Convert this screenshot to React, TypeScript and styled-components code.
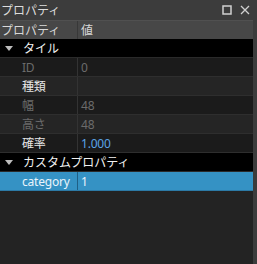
import React from 'react';
import styled, { createGlobalStyle } from 'styled-components';

const GlobalStyle = createGlobalStyle`
    html, body {
        margin: 0;
        padding: 0;
        background: #3c3c3c;
    }
`;

const Panel = styled.div`
    width: 257px;
    height: 264px;
    display: flex;
    flex-direction: column;
    background: #3c3c3c;
    font-family: 'Segoe UI', 'Noto Sans', 'Noto Sans CJK JP', sans-serif;
    font-size: 12px;
    overflow: hidden;
`;

const TitleBar = styled.div`
    height: 20px;
    display: flex;
    align-items: center;
    padding: 0 3px 0 1px;
    color: #dcdcdc;
`;

const Title = styled.span`
    flex: 1;
`;

const TitleButton = styled.span`
    width: 18px;
    height: 18px;
    display: flex;
    align-items: center;
    justify-content: center;
`;

const Tree = styled.div`
    flex: 1;
    margin-right: 4px;
    background: #232323;
    display: flex;
    flex-direction: column;
`;

const HeaderRow = styled.div`
    height: 18px;
    display: grid;
    grid-template-columns: 78px 1fr;
    background: #474747;
    color: #d8d8d8;
    border-top: 1px solid #505050;
`;

const HeaderCell = styled.div<{ $first?: boolean }>`
    display: flex;
    align-items: center;
    padding-left: ${(p) => (p.$first ? '1px' : '3px')};
    border-right: ${(p) => (p.$first ? '1px solid #383838' : 'none')};
`;

const GroupRow = styled.div`
    height: 19px;
    box-sizing: border-box;
    display: flex;
    align-items: center;
    background: #000;
    color: #f0f0f0;
    border-bottom: 1px solid #2a2a2a;
`;

const Arrow = styled.span`
    width: 0;
    height: 0;
    margin: 0 10px 0 5px;
    border-left: 4px solid transparent;
    border-right: 4px solid transparent;
    border-top: 5px solid #bdbdbd;
`;

const Row = styled.div<{ $odd?: boolean; $selected?: boolean }>`
    height: 19px;
    box-sizing: border-box;
    display: grid;
    grid-template-columns: 78px 1fr;
    background: ${(p) => (p.$selected ? '#3592c4' : p.$odd ? '#1b1b1b' : '#252525')};
    border-bottom: 1px solid ${(p) => (p.$selected ? '#2c7aa6' : '#2e2e2e')};
`;

const Cell = styled.div<{ $first?: boolean; $color: string }>`
    display: flex;
    align-items: center;
    padding-left: ${(p) => (p.$first ? '22px' : '3px')};
    color: ${(p) => p.$color};
    border-right: ${(p) => (p.$first ? '1px solid #333' : 'none')};
    white-space: nowrap;
    letter-spacing: -0.2px;
`;

const SelCell = styled(Cell)`
    border-right-color: #1f5f85;
`;

const DIM = '#6b6b6b';
const BRIGHT = '#e6e6e6';

const rows = [
    { name: 'ID', value: '0', nameColor: DIM, valueColor: DIM },
    { name: '種類', value: '', nameColor: BRIGHT, valueColor: BRIGHT },
    { name: '幅', value: '48', nameColor: DIM, valueColor: DIM },
    { name: '高さ', value: '48', nameColor: DIM, valueColor: DIM },
    { name: '確率', value: '1.000', nameColor: BRIGHT, valueColor: '#5aa3e6' },
];

const App: React.FC = () => {
    return (
        <Panel>
            <GlobalStyle />
            <TitleBar>
                <Title>プロパティ</Title>
                <TitleButton>
                    <svg width='10' height='10' viewBox='0 0 10 10'>
                        <rect x='1' y='1' width='8' height='8' fill='none' stroke='#d0d0d0' strokeWidth='1.5' />
                    </svg>
                </TitleButton>
                <TitleButton>
                    <svg width='10' height='10' viewBox='0 0 10 10'>
                        <path d='M1 1 L9 9 M9 1 L1 9' stroke='#d0d0d0' strokeWidth='1.3' />
                    </svg>
                </TitleButton>
            </TitleBar>
            <Tree>
                <HeaderRow>
                    <HeaderCell $first>プロパティ</HeaderCell>
                    <HeaderCell>値</HeaderCell>
                </HeaderRow>
                <GroupRow>
                    <Arrow />
                    タイル
                </GroupRow>
                {rows.map((r, i) => (
                    <Row key={r.name} $odd={i % 2 === 0}>
                        <Cell $first $color={r.nameColor}>{r.name}</Cell>
                        <Cell $color={r.valueColor}>{r.value}</Cell>
                    </Row>
                ))}
                <GroupRow>
                    <Arrow />
                    カスタムプロパティ
                </GroupRow>
                <Row $selected>
                    <SelCell $first $color='#eaf4fb'>category</SelCell>
                    <Cell $color='#eaf4fb'>1</Cell>
                </Row>
            </Tree>
        </Panel>
    );
};

export default App;
